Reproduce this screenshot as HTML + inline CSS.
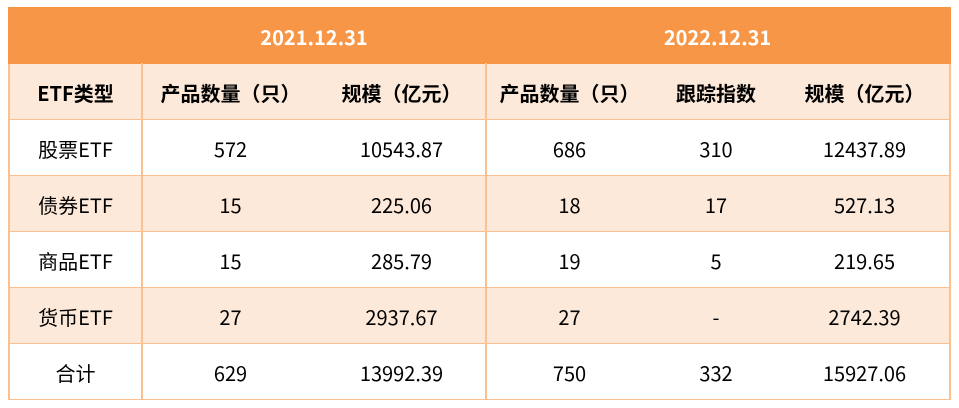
<!DOCTYPE html>
<html><head><meta charset="utf-8"><style>
body{margin:0;background:#fff;}
table{position:absolute;left:8px;top:7px;border-collapse:collapse;table-layout:fixed;width:941px;font-family:"Noto Sans CJK SC","Liberation Sans",sans-serif;font-size:20px;color:#000;}
td{height:53px;padding:0;padding-top:2px;line-height:24px;text-align:center;border-top:1.5px solid #fac090;border-bottom:1.5px solid #fac090;}
td.l{border-left:2px solid #fac090;}
td.r{border-right:2px solid #fac090;}
tr.h1 td{background:#f79646;color:#fff;font-weight:bold;border-color:#f79646;}
tr.h2 td{background:#fde9d9;font-weight:bold;}
tr.a td{background:#fde9d9;}
</style></head><body>
<table>
<colgroup><col style="width:133px"><col style="width:176px"><col style="width:168px"><col style="width:166px"><col style="width:128px"><col style="width:170px"></colgroup>
<tr class="h1"><td class="l"></td><td colspan="2">2021.12.31</td><td colspan="3" class="r">2022.12.31</td></tr>
<tr class="h2"><td class="l">ETF类型</td><td class="l">产品数量（只）</td><td>规模（亿元）</td><td class="l">产品数量（只）</td><td>跟踪指数</td><td class="r">规模（亿元）</td></tr>
<tr><td class="l">股票ETF</td><td class="l">572</td><td>10543.87</td><td class="l">686</td><td>310</td><td class="r">12437.89</td></tr>
<tr class="a"><td class="l">债券ETF</td><td class="l">15</td><td>225.06</td><td class="l">18</td><td>17</td><td class="r">527.13</td></tr>
<tr><td class="l">商品ETF</td><td class="l">15</td><td>285.79</td><td class="l">19</td><td>5</td><td class="r">219.65</td></tr>
<tr class="a"><td class="l">货币ETF</td><td class="l">27</td><td>2937.67</td><td class="l">27</td><td>-</td><td class="r">2742.39</td></tr>
<tr><td class="l">合计</td><td class="l">629</td><td>13992.39</td><td class="l">750</td><td>332</td><td class="r">15927.06</td></tr>
</table>
</body></html>
